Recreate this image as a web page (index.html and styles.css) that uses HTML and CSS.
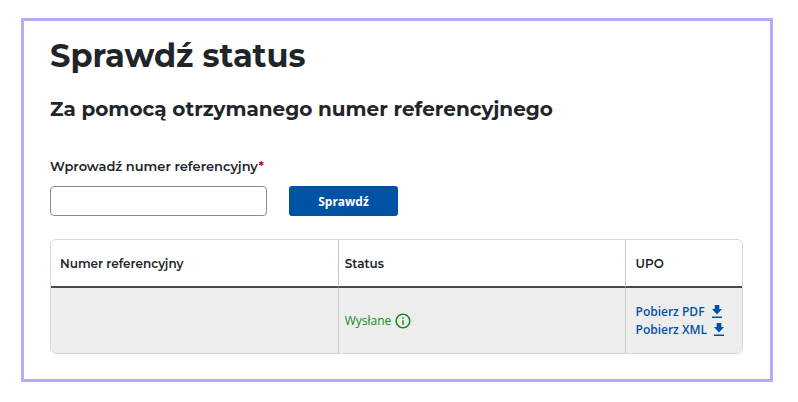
FILE: index.html
```html
<!DOCTYPE html>
<html lang="pl">
<head>
  <meta charset="UTF-8" />
  <meta name="viewport" content="width=device-width, initial-scale=1.0" />
  <title>Sprawdź status</title>
  <link rel="stylesheet" href="styles.css">
</head>
<body>
  <main class="status-panel">
    <h1>Sprawdź status</h1>
    <h2>Za pomocą otrzymanego numer referencyjnego</h2>

    <form class="search-form">
      <label for="refNumber">Wprowadź numer referencyjny<span class="required">*</span></label>
      <div class="search-row">
        <input type="text" id="refNumber" name="refNumber" required />
        <button type="submit">Sprawdź</button>
      </div>
    </form>

    <table class="results">
      <thead>
        <tr>
          <th class="col-number" scope="col">Numer referencyjny</th>
          <th class="col-status" scope="col">Status</th>
          <th class="col-upo" scope="col">UPO</th>
        </tr>
      </thead>
      <tbody>
        <tr>
          <td></td>
          <td>
            <span class="status-sent">
              Wysłane
              <svg class="icon-info" viewBox="0 0 24 24" aria-hidden="true">
                <path d="M11 7h2v2h-2zm0 4h2v6h-2zm1-9C6.48 2 2 6.48 2 12s4.48 10 10 10 10-4.48 10-10S17.52 2 12 2zm0 18c-4.41 0-8-3.59-8-8s3.59-8 8-8 8 3.59 8 8-3.59 8-8 8z" />
              </svg>
            </span>
          </td>
          <td>
            <a class="download" href="#pdf">
              Pobierz PDF
              <svg class="icon-download" viewBox="0 0 12 14" aria-hidden="true">
                <path d="M3.7 0h4.6v4H11L6 9.5 1 4h2.7zM1 11.6h10V13H1z" />
              </svg>
            </a>
            <a class="download" href="#xml">
              Pobierz XML
              <svg class="icon-download" viewBox="0 0 12 14" aria-hidden="true">
                <path d="M3.7 0h4.6v4H11L6 9.5 1 4h2.7zM1 11.6h10V13H1z" />
              </svg>
            </a>
          </td>
        </tr>
      </tbody>
    </table>
  </main>
</body>
</html>
```
FILE: styles.css
```css
:root {
  --text: #212529;
  --primary: #0052a5;
  --success: #158a1e;
  --line: #d8d8d8;
  --heading-font: Montserrat, Inter, sans-serif;
}

* {
  box-sizing: border-box;
}

body {
  margin: 18px 25px 20px 21px;
  background: #fff;
  color: var(--text);
  font-family: "Open Sans", sans-serif;
  font-size: 12px;
}

.status-panel {
  padding: 14px 27px 25px 26px;
  border: 3px solid #bba8ff;
}

h1,
h2 {
  margin: 0;
  font-family: var(--heading-font);
  font-weight: 700;
}

h1 {
  font-size: 32px;
  line-height: 42px;
}

h2 {
  margin-top: 18px;
  font-size: 20px;
  line-height: 28px;
}

.search-form {
  margin-top: 34px;
}

.search-form label {
  display: block;
  font-family: var(--heading-font);
  font-size: 13px;
  font-weight: 600;
  line-height: 18px;
}

.required {
  color: #b00020;
}

.search-row {
  display: flex;
  gap: 22px;
  margin-top: 11px;
}

.search-row input {
  width: 217px;
  height: 30px;
  padding: 0 8px;
  border: 1px solid #8c8c8c;
  border-radius: 4px;
  background: #fff;
  font: inherit;
}

.search-row button {
  width: 109px;
  height: 30px;
  border: none;
  border-radius: 3px;
  background: var(--primary);
  color: #fff;
  font-family: inherit;
  font-size: 12px;
  font-weight: 700;
  cursor: pointer;
}

.results {
  width: 100%;
  margin-top: 23px;
  border: 1px solid var(--line);
  border-radius: 6px;
  border-collapse: separate;
  border-spacing: 0;
  table-layout: fixed;
  overflow: hidden;
}

.results th,
.results td {
  padding: 0 9px;
  text-align: left;
  vertical-align: middle;
}

.results th + th,
.results td + td {
  padding-left: 6px;
  border-left: 1px solid #c8c8c8;
}

.results th:last-child,
.results td:last-child {
  padding-left: 10px;
  padding-right: 0;
}

.results th {
  height: 48px;
  border-bottom: 2px solid #454a4f;
  font-family: var(--heading-font);
  font-size: 12px;
  font-weight: 600;
}

.results td {
  height: 65px;
  background: #ededed;
}

.col-number,
.col-status {
  width: 41.5%;
}

.status-sent {
  display: flex;
  align-items: center;
  gap: 3px;
  color: var(--success);
}

.icon-info {
  width: 18px;
  height: 18px;
  fill: currentColor;
}

.download {
  display: flex;
  align-items: center;
  gap: 6px;
  color: var(--primary);
  font-weight: 600;
  line-height: 18px;
  text-decoration: none;
}

.icon-download {
  width: 12px;
  height: 14px;
  fill: currentColor;
}
```
